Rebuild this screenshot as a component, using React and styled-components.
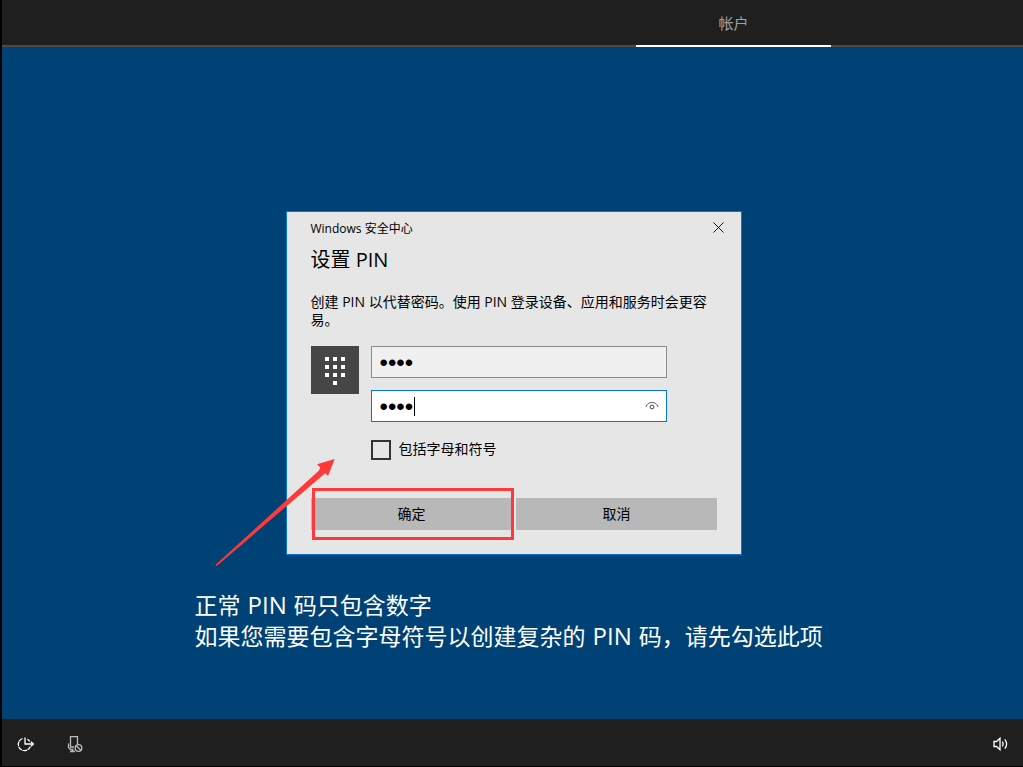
import React from "react";
import styled, { createGlobalStyle } from "styled-components";

const GlobalStyle = createGlobalStyle`
  *, *::before, *::after { box-sizing: border-box; }
  body {
    margin: 0;
    background: #000;
    font-family: "Open Sans", "Noto Sans CJK SC", sans-serif;
  }
  button, input { font: inherit; }
  h1, h2, p { margin: 0; font-weight: 400; }
`;

const Screen = styled.div`
  display: flex;
  flex-direction: column;
  min-height: 100vh;
  border-left: 2px solid #000;
  border-bottom: 1px solid #000;
  background: #004275;
`;

const StepBar = styled.nav`
  display: flex;
  justify-content: flex-end;
  height: 47px;
  padding-right: 192px;
  background: #1f1f1f;
  box-shadow: inset 0 -2px #4c4a48;
`;

const Step = styled.a`
  width: 195px;
  border-bottom: 2px solid #fff;
  color: #a0a0a0;
  font-size: 15px;
  line-height: 46px;
  text-align: center;
  text-decoration: none;
`;

const Main = styled.main`
  flex: 1;
  display: grid;
  grid-template-rows: 1fr auto 1fr;
  justify-items: center;
`;

const Dialog = styled.section`
  position: relative;
  grid-row: 2;
  width: 456px;
  max-width: 100%;
  margin-left: 2px;
  padding: 0 24px 24px;
  border: 1px solid #0078d7;
  background: #e6e6e6;
  color: #000;
`;

const TitleBar = styled.header`
  display: flex;
  align-items: center;
  justify-content: space-between;
  height: 31px;
  font-size: 12px;
`;

const CloseButton = styled.button`
  display: flex;
  align-items: center;
  justify-content: center;
  width: 45px;
  height: 31px;
  margin-right: -24px;
  padding: 0;
  border: 0;
  background: transparent;
`;

const Heading = styled.h1`
  margin-top: 2px;
  font-size: 20px;
  line-height: 30px;
`;

const Description = styled.p`
  margin-top: 18px;
  font-size: 14px;
  line-height: 18px;
`;

const PinForm = styled.div`
  display: flex;
  gap: 12px;
  margin-top: 17px;
`;

const KeypadTile = styled.svg`
  flex: none;
  width: 48px;
  height: 48px;
  background: #464646;
`;

const Fields = styled.div`
  display: flex;
  flex-direction: column;
  gap: 12px;
  width: 296px;
`;

const Field = styled.div`
  position: relative;
`;

const PinInput = styled.input`
  display: block;
  width: 100%;
  height: 32px;
  padding: 2px 8px 0;
  border: 1px solid ${(p) => (p.$active ? "#0078d7" : "#8c8c8c")};
  border-radius: 0;
  outline: none;
  background: ${(p) => (p.$active ? "#fff" : "#f0f0f0")};
  color: #000;
  font-family: "Liberation Sans", sans-serif;
  font-size: 24px;
`;

const Caret = styled.span`
  position: absolute;
  left: 43px;
  top: 7px;
  width: 1px;
  height: 19px;
  background: #000;
`;

const RevealButton = styled.button`
  position: absolute;
  top: 1px;
  right: 1px;
  display: flex;
  align-items: center;
  justify-content: center;
  width: 28px;
  height: 30px;
  padding: 0;
  border: 0;
  background: transparent;
`;

const CheckLabel = styled.label`
  display: flex;
  gap: 8px;
  height: 20px;
  margin-top: 6px;
  font-size: 14px;
  line-height: 18px;
`;

const CheckBox = styled.input`
  appearance: none;
  width: 20px;
  height: 20px;
  margin: 0;
  border: 2px solid #333;
  background: transparent;
`;

const Actions = styled.div`
  display: grid;
  grid-template-columns: 1fr 1fr;
  gap: 4px;
  margin-top: 38px;
`;

const ActionCell = styled.div`
  position: relative;
`;

const ActionButton = styled.button`
  display: block;
  width: 100%;
  height: 32px;
  padding: 0 0 2px 1px;
  border: 0;
  background: #b8b8b8;
  color: #000;
  font-size: 14px;
`;

const Highlight = styled.span`
  position: absolute;
  inset: -10px -2px -10px 1px;
  border: 3px solid #fd3a39;
  pointer-events: none;
`;

const Arrow = styled.svg`
  position: absolute;
  left: -73px;
  top: 246px;
  pointer-events: none;
`;

const Caption = styled.p`
  grid-row: 3;
  width: 632px;
  max-width: 100%;
  margin-top: 35px;
  margin-right: 4px;
  color: #fff;
  font-size: 23px;
  line-height: 31px;
`;

const Term = styled.span`
  margin: 0 1px;
  font-size: 24px;
  line-height: 1;
`;

const SystemBar = styled.footer`
  display: flex;
  align-items: center;
  gap: 29px;
  height: 47px;
  padding: 2px 14px 0 13px;
  background: #1f1f1f;
`;

const SystemButton = styled.button`
  display: flex;
  padding: 0;
  border: 0;
  background: transparent;
  margin-left: ${(p) => (p.$end ? "auto" : "0")};
`;

const keypadDots = [
  [14, 11], [22, 11], [30, 11],
  [14, 19], [22, 19], [30, 19],
  [14, 27], [22, 27], [30, 27],
  [22, 35],
];

export default function App() {
  return (
    <>
      <GlobalStyle />
      <Screen>
        <StepBar>
          <Step href="#account">帐户</Step>
        </StepBar>

        <Main>
          <Dialog role="dialog" aria-labelledby="pin-heading">
            <TitleBar>
              <span>Windows 安全中心</span>
              <CloseButton type="button" aria-label="关闭">
                <svg width="11" height="11" viewBox="0 0 11 11" fill="none" stroke="#111">
                  <path d="M.5 .5l10 10M10.500 .5l-10 10" />
                </svg>
              </CloseButton>
            </TitleBar>
            <Heading id="pin-heading">设置 PIN</Heading>
            <Description>
              创建 PIN 以代替密码。使用 PIN 登录设备、应用和服务时会更容易。
            </Description>

            <PinForm>
              <KeypadTile viewBox="0 0 48 48" fill="#fff" aria-hidden="true">
                {keypadDots.map(([x, y]) => (
                  <rect key={`${x}-${y}`} x={x} y={y} width="4" height="4" />
                ))}
              </KeypadTile>
              <Fields>
                <Field>
                  <PinInput type="password" defaultValue="1234" aria-label="新 PIN" />
                </Field>
                <Field>
                  <PinInput $active type="password" defaultValue="1234" aria-label="确认 PIN" />
                  <Caret />
                  <RevealButton type="button" aria-label="显示 PIN">
                    <svg width="14" height="10" viewBox="0 0 14 10" fill="none" stroke="#666">
                      <path d="M1 6C1.500 3 4 1.500 7 1.500S12.500 3 13 6" />
                      <circle cx="7" cy="6" r="1.900" stroke="#444" />
                    </svg>
                  </RevealButton>
                </Field>
                <CheckLabel>
                  <CheckBox type="checkbox" />
                  包括字母和符号
                </CheckLabel>
              </Fields>
            </PinForm>

            <Actions>
              <ActionCell>
                <ActionButton type="button">确定</ActionButton>
                <Highlight />
              </ActionCell>
              <ActionCell>
                <ActionButton type="button">取消</ActionButton>
              </ActionCell>
            </Actions>

            <Arrow width="122" height="109" viewBox="0 0 122 109" fill="#fd3a39" aria-hidden="true">
              <path d="M120.700 1L103 6.300L106.200 9.500L105 12.500L1.300 107L2.700 108L108.500 17.500L111.300 15.300L114 18Z" />
            </Arrow>
          </Dialog>

          <Caption>
            正常 <Term>PIN</Term> 码只包含数字
            <br />
            如果您需要包含字母符号以创建复杂的 <Term>PIN</Term> 码，请先勾选此项
          </Caption>
        </Main>

        <SystemBar>
          <SystemButton type="button" aria-label="轻松使用">
            <svg width="20" height="18" viewBox="0 0 20 18" fill="none" stroke="#fff" strokeWidth="1.300">
              <path d="M7.500 3.500A6.200 6.200 0 1 0 15.300 11.500" strokeDasharray="4.500 .6" />
              <path d="M10 2.500V9H18.500M16 6.700L18.500 9L16 11.300M12.500 4.200A6.200 6.200 0 0 1 14.800 6.500" />
            </svg>
          </SystemButton>
          <SystemButton type="button" aria-label="麦克风">
            <svg width="20" height="18" viewBox="0 0 20 18" fill="none" stroke="#bbb" strokeWidth="1.300">
              <path d="M6.500 12.500V1.600H13.500V9M6.500 12H10" />
              <path d="M4.500 8.500V12.500L6.500 14.500H9.500M8.500 14.500V16.500M6 16.500H11" />
              <circle cx="14.500" cy="13" r="3.300" />
              <path d="M12.200 10.700L16.800 15.300" />
            </svg>
          </SystemButton>
          <SystemButton type="button" aria-label="音量" $end>
            <svg width="17" height="16" viewBox="0 0 17 16" fill="none" stroke="#fff" strokeWidth="1.300">
              <path d="M2 5.500H4.500L8 2.200V13.800L4.500 10.500H2Z" />
              <path d="M10.300 5.700Q11.800 8 10.300 10.300M12.800 3.300Q16.400 8 12.800 12.700" />
            </svg>
          </SystemButton>
        </SystemBar>
      </Screen>
    </>
  );
}
